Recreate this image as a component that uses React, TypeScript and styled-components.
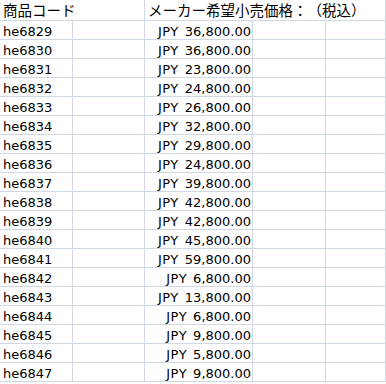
import React from 'react'
import styled, { createGlobalStyle } from 'styled-components'

type Item = { code: string; price: string }

const items: Item[] = [
    { code: 'he6829', price: '36,800.00' },
    { code: 'he6830', price: '36,800.00' },
    { code: 'he6831', price: '23,800.00' },
    { code: 'he6832', price: '24,800.00' },
    { code: 'he6833', price: '26,800.00' },
    { code: 'he6834', price: '32,800.00' },
    { code: 'he6835', price: '29,800.00' },
    { code: 'he6836', price: '24,800.00' },
    { code: 'he6837', price: '39,800.00' },
    { code: 'he6838', price: '42,800.00' },
    { code: 'he6839', price: '42,800.00' },
    { code: 'he6840', price: '45,800.00' },
    { code: 'he6841', price: '59,800.00' },
    { code: 'he6842', price: '6,800.00' },
    { code: 'he6843', price: '13,800.00' },
    { code: 'he6844', price: '6,800.00' },
    { code: 'he6845', price: '9,800.00' },
    { code: 'he6846', price: '5,800.00' },
    { code: 'he6847', price: '9,800.00' },
]

function App() {
    return (
        <>
            <GlobalStyle />
            <StSheet>
                <StHeaderRow>
                    <StHeaderCell $noRight>商品コード</StHeaderCell>
                    <StHeaderCell />
                    <StHeaderCell $noRight>メーカー希望小売価格：（税込）</StHeaderCell>
                    <StHeaderCell $noRight />
                    <StHeaderCell />
                </StHeaderRow>
                {items.map((item) => (
                    <StRow key={item.code}>
                        <StCell>{item.code}</StCell>
                        <StCell />
                        <StCell $right>
                            <StCurrency>JPY</StCurrency>
                            {item.price}
                        </StCell>
                        <StCell />
                        <StCell />
                    </StRow>
                ))}
            </StSheet>
        </>
    )
}

export default App

const GlobalStyle = createGlobalStyle`
    body {
        margin: 0;
        background: #fff;
    }
    * {
        box-sizing: border-box;
    }
`

const StSheet = styled.div`
    width: 386px;
    height: 384px;
    overflow: hidden;
    background: #fff;
    color: #000;
    font-family: "DejaVu Sans", "Noto Sans CJK JP", sans-serif;
`

const columns = '73px 72px 108px 73px 1fr'

const StHeaderRow = styled.div`
    display: grid;
    grid-template-columns: ${columns};
    height: 21px;
    border-bottom: 1px solid #d0d7e5;
`

const StHeaderCell = styled.div<{ $noRight?: boolean }>`
    position: relative;
    z-index: 1;
    white-space: nowrap;
    overflow: visible;
    padding: 0 0 0 3px;
    font-family: "Noto Sans CJK JP", sans-serif;
    font-size: 14.5px;
    line-height: 20px;
    text-spacing-trim: space-all;
    border-right: ${({ $noRight }) => ($noRight ? 'none' : '1px solid #d0d7e5')};
`

const StRow = styled.div`
    display: grid;
    grid-template-columns: ${columns};
    height: 19px;
    border-bottom: 1px solid #d0d7e5;
`

const StCell = styled.div<{ $right?: boolean }>`
    white-space: nowrap;
    overflow: hidden;
    font-size: 13px;
    line-height: 14px;
    padding: 4px 1px 0 3px;
    text-align: ${({ $right }) => ($right ? 'right' : 'left')};
    border-right: 1px solid #d0d7e5;
`

const StCurrency = styled.span`
    letter-spacing: 0.5px;
    margin-right: 6px;
`
